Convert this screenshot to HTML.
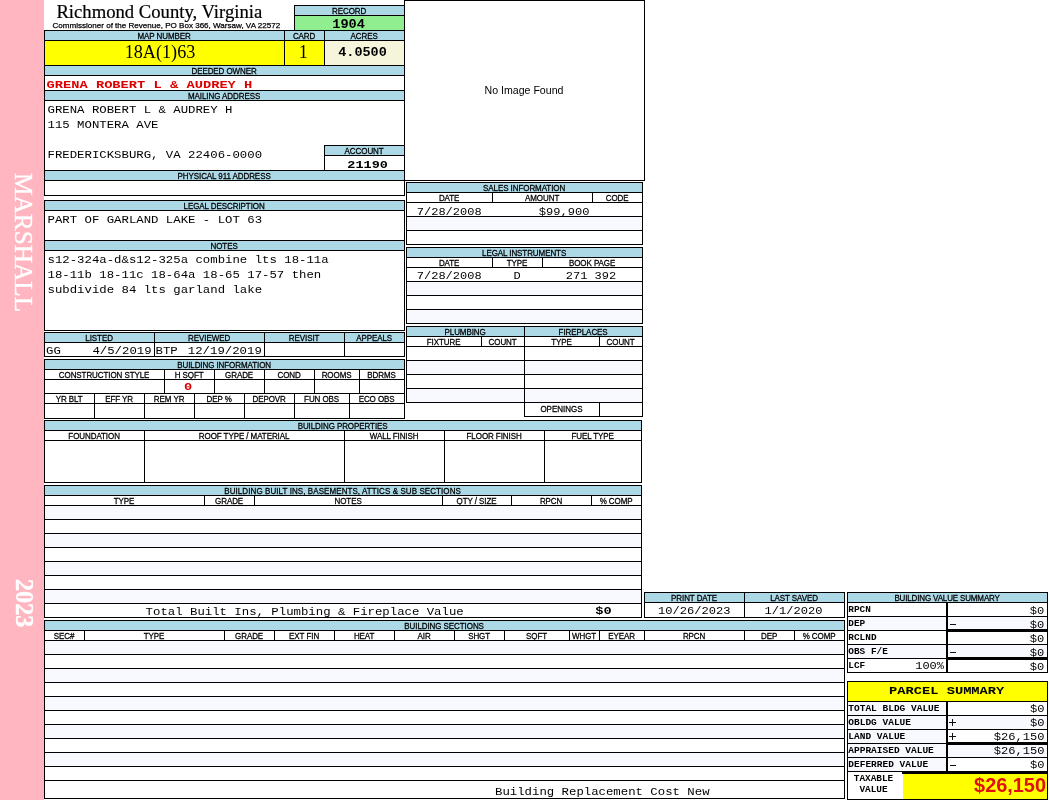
<!DOCTYPE html>
<html lang="en"><head><meta charset="utf-8"><title>Richmond County, Virginia - Property Card</title>
<style>
html,body{margin:0;padding:0;background:#fff;}
body{width:1050px;height:800px;overflow:hidden;font-family:"Liberation Sans",sans-serif;color:#000;}
#page{position:relative;width:1050px;height:800px;overflow:hidden;background:#fff;will-change:transform;}
.c{position:absolute;box-sizing:border-box;border:1px solid #000;}
.f{position:absolute;}
.t{position:absolute;white-space:pre;}
.sans{font-family:"Liberation Sans",sans-serif;}
.mono{font-family:"Liberation Mono",monospace;}
.serif{font-family:"Liberation Serif",serif;}
.b{font-weight:bold;}
.lb{-webkit-text-stroke:0.25px #000;}
.ts{-webkit-text-stroke:0.2px #000;}
.v{position:absolute;white-space:pre;color:#fff;line-height:1;height:1em;transform-origin:0 0;transform:rotate(90deg) translateY(-0.78em);-webkit-text-stroke:0.35px #fff;}
</style></head>
<body>
<div id="page">
<div class="f" style="left:0px;top:0px;width:44px;height:800px;background:#FFB6C1"></div>
<div class="t serif ts" style="top:-0.90px;font-size:18.67px;line-height:26px;left:56.40px;">Richmond County, Virginia</div>
<div class="t sans lb" style="top:20.21px;font-size:8.05px;line-height:12px;left:52.50px;">Commissioner of the Revenue, PO Box 366, Warsaw, VA 22572</div>
<div class="c" style="left:294px;top:5px;width:111px;height:11px;background:#ADD8E6;"></div>
<div class="t sans lb" style="top:5.93px;font-size:8px;line-height:12px;left:294.10px;width:110px;text-align:center;letter-spacing:-0.08px;transform:scale(1,1.08);transform-origin:50% 8.77px;">RECORD</div>
<div class="c" style="left:294px;top:15px;width:111px;height:16px;background:#90EE90;"></div>
<div class="t mono b" style="top:14.77px;font-size:13.66px;line-height:20px;left:148.60px;width:400px;text-align:center;transform:scale(1,0.889);transform-origin:50% 13.63px;">1904</div>
<div class="c" style="left:44px;top:30px;width:241px;height:11px;background:#ADD8E6;"></div>
<div class="t sans lb" style="top:30.93px;font-size:8px;line-height:12px;left:44.10px;width:240px;text-align:center;letter-spacing:-0.08px;transform:scale(1,1.08);transform-origin:50% 8.77px;">MAP NUMBER</div>
<div class="c" style="left:284px;top:30px;width:41px;height:11px;background:#ADD8E6;"></div>
<div class="t sans lb" style="top:30.93px;font-size:8px;line-height:12px;left:284.10px;width:40px;text-align:center;letter-spacing:-0.08px;transform:scale(1,1.08);transform-origin:50% 8.77px;">CARD</div>
<div class="c" style="left:324px;top:30px;width:81px;height:11px;background:#ADD8E6;"></div>
<div class="t sans lb" style="top:30.93px;font-size:8px;line-height:12px;left:324.10px;width:80px;text-align:center;letter-spacing:-0.08px;transform:scale(1,1.08);transform-origin:50% 8.77px;">ACRES</div>
<div class="c" style="left:44px;top:40px;width:241px;height:26px;background:#FFFF00;"></div>
<div class="c" style="left:284px;top:40px;width:41px;height:26px;background:#FFFF00;"></div>
<div class="c" style="left:324px;top:40px;width:81px;height:26px;background:#F5F5DC;"></div>
<div class="t serif" style="top:38.86px;font-size:18.2px;line-height:26px;left:-40.00px;width:400px;text-align:center;">18A(1)63</div>
<div class="t serif" style="top:38.86px;font-size:18.2px;line-height:26px;left:103.30px;width:400px;text-align:center;">1</div>
<div class="t mono b" style="top:42.81px;font-size:13.5px;line-height:20px;left:162.50px;width:400px;text-align:center;transform:scale(1,0.888);transform-origin:50% 13.59px;">4.0500</div>
<div class="c" style="left:44px;top:65px;width:361px;height:11px;background:#ADD8E6;"></div>
<div class="t sans lb" style="top:65.93px;font-size:8px;line-height:12px;left:44.10px;width:360px;text-align:center;letter-spacing:-0.08px;transform:scale(1,1.08);transform-origin:50% 8.77px;">DEEDED OWNER</div>
<div class="c" style="left:44px;top:75px;width:361px;height:16px;"></div>
<div class="t mono b" style="top:74.85px;font-size:13.73px;line-height:20px;left:46.50px;color:#DC0000;transform:scale(1,0.862);transform-origin:0 13.65px;">GRENA ROBERT L &amp; AUDREY H</div>
<div class="c" style="left:44px;top:90px;width:361px;height:11px;background:#ADD8E6;"></div>
<div class="t sans lb" style="top:90.93px;font-size:8px;line-height:12px;left:44.10px;width:360px;text-align:center;letter-spacing:-0.08px;transform:scale(1,1.08);transform-origin:50% 8.77px;">MAILING ADDRESS</div>
<div class="c" style="left:44px;top:100px;width:361px;height:71px;"></div>
<div class="t mono" style="top:100.72px;font-size:12.33px;line-height:18px;left:47.50px;transform:scale(1,0.948);transform-origin:0 12.28px;">GRENA ROBERT L &amp; AUDREY H</div>
<div class="t mono" style="top:115.72px;font-size:12.33px;line-height:18px;left:47.50px;transform:scale(1,0.948);transform-origin:0 12.28px;">115 MONTERA AVE</div>
<div class="t mono" style="top:145.72px;font-size:12.33px;line-height:18px;left:47.50px;transform:scale(1,0.948);transform-origin:0 12.28px;">FREDERICKSBURG, VA 22406-0000</div>
<div class="c" style="left:324px;top:145px;width:81px;height:11px;background:#ADD8E6;"></div>
<div class="t sans lb" style="top:145.93px;font-size:8px;line-height:12px;left:324.10px;width:80px;text-align:center;letter-spacing:-0.08px;transform:scale(1,1.08);transform-origin:50% 8.77px;">ACCOUNT</div>
<div class="c" style="left:324px;top:155px;width:81px;height:16px;"></div>
<div class="t mono b" style="top:155.41px;font-size:13.5px;line-height:20px;left:167.60px;width:400px;text-align:center;transform:scale(1,0.866);transform-origin:50% 13.59px;">21190</div>
<div class="c" style="left:44px;top:170px;width:361px;height:11px;background:#ADD8E6;"></div>
<div class="t sans lb" style="top:170.93px;font-size:8px;line-height:12px;left:44.10px;width:360px;text-align:center;letter-spacing:-0.08px;transform:scale(1,1.08);transform-origin:50% 8.77px;">PHYSICAL 911 ADDRESS</div>
<div class="c" style="left:44px;top:180px;width:361px;height:16px;"></div>
<div class="c" style="left:44px;top:200px;width:361px;height:11px;background:#ADD8E6;"></div>
<div class="t sans lb" style="top:200.93px;font-size:8px;line-height:12px;left:44.10px;width:360px;text-align:center;letter-spacing:-0.08px;transform:scale(1,1.08);transform-origin:50% 8.77px;">LEGAL DESCRIPTION</div>
<div class="c" style="left:44px;top:210px;width:361px;height:31px;"></div>
<div class="t mono" style="top:210.72px;font-size:12.33px;line-height:18px;left:47.50px;transform:scale(1,0.948);transform-origin:0 12.28px;">PART OF GARLAND LAKE - LOT 63</div>
<div class="c" style="left:44px;top:240px;width:361px;height:11px;background:#ADD8E6;"></div>
<div class="t sans lb" style="top:240.93px;font-size:8px;line-height:12px;left:44.10px;width:360px;text-align:center;letter-spacing:-0.08px;transform:scale(1,1.08);transform-origin:50% 8.77px;">NOTES</div>
<div class="c" style="left:44px;top:250px;width:361px;height:81px;"></div>
<div class="t mono" style="top:250.72px;font-size:12.33px;line-height:18px;left:47.50px;transform:scale(1,0.948);transform-origin:0 12.28px;">s12-324a-d&amp;s12-325a combine lts 18-11a</div>
<div class="t mono" style="top:265.72px;font-size:12.33px;line-height:18px;left:47.50px;transform:scale(1,0.948);transform-origin:0 12.28px;">18-11b 18-11c 18-64a 18-65 17-57 then</div>
<div class="t mono" style="top:280.72px;font-size:12.33px;line-height:18px;left:47.50px;transform:scale(1,0.948);transform-origin:0 12.28px;">subdivide 84 lts garland lake</div>
<div class="c" style="left:44px;top:332px;width:111px;height:11px;background:#ADD8E6;"></div>
<div class="t sans lb" style="top:332.93px;font-size:8px;line-height:12px;left:44.10px;width:110px;text-align:center;letter-spacing:-0.08px;transform:scale(1,1.08);transform-origin:50% 8.77px;">LISTED</div>
<div class="c" style="left:44px;top:342px;width:111px;height:15px;"></div>
<div class="c" style="left:154px;top:332px;width:111px;height:11px;background:#ADD8E6;"></div>
<div class="t sans lb" style="top:332.93px;font-size:8px;line-height:12px;left:154.10px;width:110px;text-align:center;letter-spacing:-0.08px;transform:scale(1,1.08);transform-origin:50% 8.77px;">REVIEWED</div>
<div class="c" style="left:154px;top:342px;width:111px;height:15px;"></div>
<div class="c" style="left:264px;top:332px;width:81px;height:11px;background:#ADD8E6;"></div>
<div class="t sans lb" style="top:332.93px;font-size:8px;line-height:12px;left:264.10px;width:80px;text-align:center;letter-spacing:-0.08px;transform:scale(1,1.08);transform-origin:50% 8.77px;">REVISIT</div>
<div class="c" style="left:264px;top:342px;width:81px;height:15px;"></div>
<div class="c" style="left:344px;top:332px;width:61px;height:11px;background:#ADD8E6;"></div>
<div class="t sans lb" style="top:332.93px;font-size:8px;line-height:12px;left:344.10px;width:60px;text-align:center;letter-spacing:-0.08px;transform:scale(1,1.08);transform-origin:50% 8.77px;">APPEALS</div>
<div class="c" style="left:344px;top:342px;width:61px;height:15px;"></div>
<div class="t mono" style="top:341.72px;font-size:12.33px;line-height:18px;left:46.00px;transform:scale(1,0.948);transform-origin:0 12.28px;">GG</div>
<div class="t mono" style="top:341.72px;font-size:12.33px;line-height:18px;left:-248.40px;width:400px;text-align:right;transform:scale(1,0.948);transform-origin:100% 12.28px;">4/5/2019</div>
<div class="t mono" style="top:341.72px;font-size:12.33px;line-height:18px;left:155.50px;transform:scale(1,0.948);transform-origin:0 12.28px;">BTP</div>
<div class="t mono" style="top:341.72px;font-size:12.33px;line-height:18px;left:-138.20px;width:400px;text-align:right;transform:scale(1,0.948);transform-origin:100% 12.28px;">12/19/2019</div>
<div class="c" style="left:44px;top:359px;width:361px;height:11px;background:#ADD8E6;"></div>
<div class="t sans lb" style="top:359.93px;font-size:8px;line-height:12px;left:44.10px;width:360px;text-align:center;letter-spacing:-0.08px;transform:scale(1,1.08);transform-origin:50% 8.77px;">BUILDING INFORMATION</div>
<div class="c" style="left:44px;top:369px;width:121px;height:11px;"></div>
<div class="t sans lb" style="top:369.93px;font-size:8px;line-height:12px;left:44.10px;width:120px;text-align:center;letter-spacing:-0.08px;transform:scale(1,1.08);transform-origin:50% 8.77px;">CONSTRUCTION STYLE</div>
<div class="c" style="left:44px;top:379px;width:121px;height:15px;"></div>
<div class="c" style="left:164px;top:369px;width:51px;height:11px;"></div>
<div class="t sans lb" style="top:369.93px;font-size:8px;line-height:12px;left:164.10px;width:50px;text-align:center;letter-spacing:-0.08px;transform:scale(1,1.08);transform-origin:50% 8.77px;">H SQFT</div>
<div class="c" style="left:164px;top:379px;width:51px;height:15px;"></div>
<div class="c" style="left:214px;top:369px;width:51px;height:11px;"></div>
<div class="t sans lb" style="top:369.93px;font-size:8px;line-height:12px;left:214.10px;width:50px;text-align:center;letter-spacing:-0.08px;transform:scale(1,1.08);transform-origin:50% 8.77px;">GRADE</div>
<div class="c" style="left:214px;top:379px;width:51px;height:15px;"></div>
<div class="c" style="left:264px;top:369px;width:51px;height:11px;"></div>
<div class="t sans lb" style="top:369.93px;font-size:8px;line-height:12px;left:264.10px;width:50px;text-align:center;letter-spacing:-0.08px;transform:scale(1,1.08);transform-origin:50% 8.77px;">COND</div>
<div class="c" style="left:264px;top:379px;width:51px;height:15px;"></div>
<div class="c" style="left:314px;top:369px;width:46px;height:11px;"></div>
<div class="t sans lb" style="top:369.93px;font-size:8px;line-height:12px;left:314.10px;width:45px;text-align:center;letter-spacing:-0.08px;transform:scale(1,1.08);transform-origin:50% 8.77px;">ROOMS</div>
<div class="c" style="left:314px;top:379px;width:46px;height:15px;"></div>
<div class="c" style="left:359px;top:369px;width:46px;height:11px;"></div>
<div class="t sans lb" style="top:369.93px;font-size:8px;line-height:12px;left:359.10px;width:45px;text-align:center;letter-spacing:-0.08px;transform:scale(1,1.08);transform-origin:50% 8.77px;">BDRMS</div>
<div class="c" style="left:359px;top:379px;width:46px;height:15px;"></div>
<div class="t mono b" style="top:377.37px;font-size:13.66px;line-height:20px;left:-11.80px;width:400px;text-align:center;color:#D80000;transform:scale(1,0.833);transform-origin:50% 13.63px;">0</div>
<div class="c" style="left:44px;top:393px;width:51px;height:11px;"></div>
<div class="t sans lb" style="top:393.93px;font-size:8px;line-height:12px;left:44.10px;width:50px;text-align:center;letter-spacing:-0.08px;transform:scale(1,1.08);transform-origin:50% 8.77px;">YR BLT</div>
<div class="c" style="left:44px;top:403px;width:51px;height:16px;"></div>
<div class="c" style="left:94px;top:393px;width:51px;height:11px;"></div>
<div class="t sans lb" style="top:393.93px;font-size:8px;line-height:12px;left:94.10px;width:50px;text-align:center;letter-spacing:-0.08px;transform:scale(1,1.08);transform-origin:50% 8.77px;">EFF YR</div>
<div class="c" style="left:94px;top:403px;width:51px;height:16px;"></div>
<div class="c" style="left:144px;top:393px;width:51px;height:11px;"></div>
<div class="t sans lb" style="top:393.93px;font-size:8px;line-height:12px;left:144.10px;width:50px;text-align:center;letter-spacing:-0.08px;transform:scale(1,1.08);transform-origin:50% 8.77px;">REM YR</div>
<div class="c" style="left:144px;top:403px;width:51px;height:16px;"></div>
<div class="c" style="left:194px;top:393px;width:51px;height:11px;"></div>
<div class="t sans lb" style="top:393.93px;font-size:8px;line-height:12px;left:194.10px;width:50px;text-align:center;letter-spacing:-0.08px;transform:scale(1,1.08);transform-origin:50% 8.77px;">DEP %</div>
<div class="c" style="left:194px;top:403px;width:51px;height:16px;"></div>
<div class="c" style="left:244px;top:393px;width:51px;height:11px;"></div>
<div class="t sans lb" style="top:393.93px;font-size:8px;line-height:12px;left:244.10px;width:50px;text-align:center;letter-spacing:-0.08px;transform:scale(1,1.08);transform-origin:50% 8.77px;">DEPOVR</div>
<div class="c" style="left:244px;top:403px;width:51px;height:16px;"></div>
<div class="c" style="left:294px;top:393px;width:56px;height:11px;"></div>
<div class="t sans lb" style="top:393.93px;font-size:8px;line-height:12px;left:294.10px;width:55px;text-align:center;letter-spacing:-0.08px;transform:scale(1,1.08);transform-origin:50% 8.77px;">FUN OBS</div>
<div class="c" style="left:294px;top:403px;width:56px;height:16px;"></div>
<div class="c" style="left:349px;top:393px;width:56px;height:11px;"></div>
<div class="t sans lb" style="top:393.93px;font-size:8px;line-height:12px;left:349.10px;width:55px;text-align:center;letter-spacing:-0.08px;transform:scale(1,1.08);transform-origin:50% 8.77px;">ECO OBS</div>
<div class="c" style="left:349px;top:403px;width:56px;height:16px;"></div>
<div class="c" style="left:44px;top:420px;width:598px;height:11px;background:#ADD8E6;"></div>
<div class="t sans lb" style="top:420.93px;font-size:8px;line-height:12px;left:44.10px;width:597px;text-align:center;letter-spacing:-0.08px;transform:scale(1,1.08);transform-origin:50% 8.77px;">BUILDING PROPERTIES</div>
<div class="c" style="left:44px;top:430px;width:101px;height:11px;"></div>
<div class="t sans lb" style="top:430.93px;font-size:8px;line-height:12px;left:44.10px;width:100px;text-align:center;letter-spacing:-0.08px;transform:scale(1,1.08);transform-origin:50% 8.77px;">FOUNDATION</div>
<div class="c" style="left:44px;top:440px;width:101px;height:43px;"></div>
<div class="c" style="left:144px;top:430px;width:201px;height:11px;"></div>
<div class="t sans lb" style="top:430.93px;font-size:8px;line-height:12px;left:144.10px;width:200px;text-align:center;letter-spacing:-0.08px;transform:scale(1,1.08);transform-origin:50% 8.77px;">ROOF TYPE / MATERIAL</div>
<div class="c" style="left:144px;top:440px;width:201px;height:43px;"></div>
<div class="c" style="left:344px;top:430px;width:101px;height:11px;"></div>
<div class="t sans lb" style="top:430.93px;font-size:8px;line-height:12px;left:344.10px;width:100px;text-align:center;letter-spacing:-0.08px;transform:scale(1,1.08);transform-origin:50% 8.77px;">WALL FINISH</div>
<div class="c" style="left:344px;top:440px;width:101px;height:43px;"></div>
<div class="c" style="left:444px;top:430px;width:101px;height:11px;"></div>
<div class="t sans lb" style="top:430.93px;font-size:8px;line-height:12px;left:444.10px;width:100px;text-align:center;letter-spacing:-0.08px;transform:scale(1,1.08);transform-origin:50% 8.77px;">FLOOR FINISH</div>
<div class="c" style="left:444px;top:440px;width:101px;height:43px;"></div>
<div class="c" style="left:544px;top:430px;width:98px;height:11px;"></div>
<div class="t sans lb" style="top:430.93px;font-size:8px;line-height:12px;left:544.10px;width:97px;text-align:center;letter-spacing:-0.08px;transform:scale(1,1.08);transform-origin:50% 8.77px;">FUEL TYPE</div>
<div class="c" style="left:544px;top:440px;width:98px;height:43px;"></div>
<div class="c" style="left:44px;top:485px;width:598px;height:11px;background:#ADD8E6;"></div>
<div class="t sans lb" style="top:485.93px;font-size:8px;line-height:12px;left:44.10px;width:597px;text-align:center;letter-spacing:0.08px;transform:scale(1,1.08);transform-origin:50% 8.77px;">BUILDING BUILT INS, BASEMENTS, ATTICS &amp; SUB SECTIONS</div>
<div class="c" style="left:44px;top:495px;width:161px;height:11px;"></div>
<div class="t sans lb" style="top:495.93px;font-size:8px;line-height:12px;left:44.10px;width:160px;text-align:center;letter-spacing:-0.08px;transform:scale(1,1.08);transform-origin:50% 8.77px;">TYPE</div>
<div class="c" style="left:204px;top:495px;width:51px;height:11px;"></div>
<div class="t sans lb" style="top:495.93px;font-size:8px;line-height:12px;left:204.10px;width:50px;text-align:center;letter-spacing:-0.08px;transform:scale(1,1.08);transform-origin:50% 8.77px;">GRADE</div>
<div class="c" style="left:254px;top:495px;width:189px;height:11px;"></div>
<div class="t sans lb" style="top:495.93px;font-size:8px;line-height:12px;left:254.10px;width:188px;text-align:center;letter-spacing:-0.08px;transform:scale(1,1.08);transform-origin:50% 8.77px;">NOTES</div>
<div class="c" style="left:442px;top:495px;width:70px;height:11px;"></div>
<div class="t sans lb" style="top:495.93px;font-size:8px;line-height:12px;left:442.10px;width:69px;text-align:center;letter-spacing:-0.08px;transform:scale(1,1.08);transform-origin:50% 8.77px;">QTY / SIZE</div>
<div class="c" style="left:511px;top:495px;width:81px;height:11px;"></div>
<div class="t sans lb" style="top:495.93px;font-size:8px;line-height:12px;left:511.10px;width:80px;text-align:center;letter-spacing:-0.08px;transform:scale(1,1.08);transform-origin:50% 8.77px;">RPCN</div>
<div class="c" style="left:591px;top:495px;width:51px;height:11px;"></div>
<div class="t sans lb" style="top:495.93px;font-size:8px;line-height:12px;left:591.10px;width:50px;text-align:center;letter-spacing:-0.08px;transform:scale(1,1.08);transform-origin:50% 8.77px;">% COMP</div>
<div class="c" style="left:44px;top:505px;width:598px;height:15px;background:#F8F8FF;"></div>
<div class="c" style="left:44px;top:519px;width:598px;height:15px;"></div>
<div class="c" style="left:44px;top:533px;width:598px;height:15px;background:#F8F8FF;"></div>
<div class="c" style="left:44px;top:547px;width:598px;height:15px;"></div>
<div class="c" style="left:44px;top:561px;width:598px;height:15px;background:#F8F8FF;"></div>
<div class="c" style="left:44px;top:575px;width:598px;height:15px;"></div>
<div class="c" style="left:44px;top:589px;width:598px;height:15px;background:#F8F8FF;"></div>
<div class="c" style="left:44px;top:603px;width:598px;height:15px;"></div>
<div class="t mono" style="top:602.72px;font-size:12.33px;line-height:18px;left:145.60px;transform:scale(1,0.948);transform-origin:0 12.28px;">Total Built Ins, Plumbing &amp; Fireplace Value</div>
<div class="t mono b" style="top:601.37px;font-size:13.66px;line-height:20px;left:595.20px;transform:scale(1,0.844);transform-origin:0 13.63px;">$0</div>
<div class="c" style="left:44px;top:620px;width:801px;height:11px;background:#ADD8E6;"></div>
<div class="t sans lb" style="top:620.93px;font-size:8px;line-height:12px;left:44.10px;width:800px;text-align:center;letter-spacing:-0.08px;transform:scale(1,1.08);transform-origin:50% 8.77px;">BUILDING SECTIONS</div>
<div class="c" style="left:44px;top:630px;width:41px;height:11px;"></div>
<div class="t sans lb" style="top:630.93px;font-size:8px;line-height:12px;left:44.10px;width:40px;text-align:center;letter-spacing:-0.08px;transform:scale(1,1.08);transform-origin:50% 8.77px;">SEC#</div>
<div class="c" style="left:84px;top:630px;width:141px;height:11px;"></div>
<div class="t sans lb" style="top:630.93px;font-size:8px;line-height:12px;left:84.10px;width:140px;text-align:center;letter-spacing:-0.08px;transform:scale(1,1.08);transform-origin:50% 8.77px;">TYPE</div>
<div class="c" style="left:224px;top:630px;width:51px;height:11px;"></div>
<div class="t sans lb" style="top:630.93px;font-size:8px;line-height:12px;left:224.10px;width:50px;text-align:center;letter-spacing:-0.08px;transform:scale(1,1.08);transform-origin:50% 8.77px;">GRADE</div>
<div class="c" style="left:274px;top:630px;width:61px;height:11px;"></div>
<div class="t sans lb" style="top:630.93px;font-size:8px;line-height:12px;left:274.10px;width:60px;text-align:center;letter-spacing:-0.08px;transform:scale(1,1.08);transform-origin:50% 8.77px;">EXT FIN</div>
<div class="c" style="left:334px;top:630px;width:61px;height:11px;"></div>
<div class="t sans lb" style="top:630.93px;font-size:8px;line-height:12px;left:334.10px;width:60px;text-align:center;letter-spacing:-0.08px;transform:scale(1,1.08);transform-origin:50% 8.77px;">HEAT</div>
<div class="c" style="left:394px;top:630px;width:61px;height:11px;"></div>
<div class="t sans lb" style="top:630.93px;font-size:8px;line-height:12px;left:394.10px;width:60px;text-align:center;letter-spacing:-0.08px;transform:scale(1,1.08);transform-origin:50% 8.77px;">AIR</div>
<div class="c" style="left:454px;top:630px;width:51px;height:11px;"></div>
<div class="t sans lb" style="top:630.93px;font-size:8px;line-height:12px;left:454.10px;width:50px;text-align:center;letter-spacing:-0.08px;transform:scale(1,1.08);transform-origin:50% 8.77px;">SHGT</div>
<div class="c" style="left:504px;top:630px;width:66px;height:11px;"></div>
<div class="t sans lb" style="top:630.93px;font-size:8px;line-height:12px;left:504.10px;width:65px;text-align:center;letter-spacing:-0.08px;transform:scale(1,1.08);transform-origin:50% 8.77px;">SQFT</div>
<div class="c" style="left:569px;top:630px;width:31px;height:11px;"></div>
<div class="t sans lb" style="top:630.93px;font-size:8px;line-height:12px;left:569.10px;width:30px;text-align:center;letter-spacing:-0.08px;transform:scale(1,1.08);transform-origin:50% 8.77px;">WHGT</div>
<div class="c" style="left:599px;top:630px;width:46px;height:11px;"></div>
<div class="t sans lb" style="top:630.93px;font-size:8px;line-height:12px;left:599.10px;width:45px;text-align:center;letter-spacing:-0.08px;transform:scale(1,1.08);transform-origin:50% 8.77px;">EYEAR</div>
<div class="c" style="left:644px;top:630px;width:101px;height:11px;"></div>
<div class="t sans lb" style="top:630.93px;font-size:8px;line-height:12px;left:644.10px;width:100px;text-align:center;letter-spacing:-0.08px;transform:scale(1,1.08);transform-origin:50% 8.77px;">RPCN</div>
<div class="c" style="left:744px;top:630px;width:51px;height:11px;"></div>
<div class="t sans lb" style="top:630.93px;font-size:8px;line-height:12px;left:744.10px;width:50px;text-align:center;letter-spacing:-0.08px;transform:scale(1,1.08);transform-origin:50% 8.77px;">DEP</div>
<div class="c" style="left:794px;top:630px;width:51px;height:11px;"></div>
<div class="t sans lb" style="top:630.93px;font-size:8px;line-height:12px;left:794.10px;width:50px;text-align:center;letter-spacing:-0.08px;transform:scale(1,1.08);transform-origin:50% 8.77px;">% COMP</div>
<div class="c" style="left:44px;top:640px;width:801px;height:15px;background:#F8F8FF;"></div>
<div class="c" style="left:44px;top:654px;width:801px;height:15px;"></div>
<div class="c" style="left:44px;top:668px;width:801px;height:15px;background:#F8F8FF;"></div>
<div class="c" style="left:44px;top:682px;width:801px;height:15px;"></div>
<div class="c" style="left:44px;top:696px;width:801px;height:15px;background:#F8F8FF;"></div>
<div class="c" style="left:44px;top:710px;width:801px;height:15px;"></div>
<div class="c" style="left:44px;top:724px;width:801px;height:15px;background:#F8F8FF;"></div>
<div class="c" style="left:44px;top:738px;width:801px;height:15px;"></div>
<div class="c" style="left:44px;top:752px;width:801px;height:15px;background:#F8F8FF;"></div>
<div class="c" style="left:44px;top:766px;width:801px;height:15px;"></div>
<div class="c" style="left:44px;top:780px;width:801px;height:19px;"></div>
<div class="t mono" style="top:782.72px;font-size:12.33px;line-height:18px;left:495.00px;transform:scale(1,0.948);transform-origin:0 12.28px;">Building Replacement Cost New</div>
<div class="c" style="left:404px;top:0px;width:241px;height:181px;"></div>
<div class="t sans" style="top:82.33px;font-size:10.6px;line-height:16px;left:324.00px;width:400px;text-align:center;">No Image Found</div>
<div class="c" style="left:406px;top:182px;width:237px;height:11px;background:#ADD8E6;"></div>
<div class="t sans lb" style="top:182.93px;font-size:8px;line-height:12px;left:406.10px;width:236px;text-align:center;letter-spacing:-0.08px;transform:scale(1,1.08);transform-origin:50% 8.77px;">SALES INFORMATION</div>
<div class="c" style="left:406px;top:192px;width:87px;height:11px;"></div>
<div class="t sans lb" style="top:192.93px;font-size:8px;line-height:12px;left:406.10px;width:86px;text-align:center;letter-spacing:-0.08px;transform:scale(1,1.08);transform-origin:50% 8.77px;">DATE</div>
<div class="c" style="left:492px;top:192px;width:101px;height:11px;"></div>
<div class="t sans lb" style="top:192.93px;font-size:8px;line-height:12px;left:492.10px;width:100px;text-align:center;letter-spacing:-0.08px;transform:scale(1,1.08);transform-origin:50% 8.77px;">AMOUNT</div>
<div class="c" style="left:592px;top:192px;width:51px;height:11px;"></div>
<div class="t sans lb" style="top:192.93px;font-size:8px;line-height:12px;left:592.10px;width:50px;text-align:center;letter-spacing:-0.08px;transform:scale(1,1.08);transform-origin:50% 8.77px;">CODE</div>
<div class="c" style="left:406px;top:202px;width:237px;height:15px;"></div>
<div class="c" style="left:406px;top:216px;width:237px;height:15px;background:#F8F8FF;"></div>
<div class="c" style="left:406px;top:230px;width:237px;height:15px;"></div>
<div class="t mono" style="top:202.81px;font-size:12.0px;line-height:18px;left:249.20px;width:400px;text-align:center;transform:scale(1,0.974);transform-origin:50% 12.19px;">7/28/2008</div>
<div class="t mono" style="top:202.79px;font-size:12.08px;line-height:18px;left:189.50px;width:400px;text-align:right;transform:scale(1,0.967);transform-origin:100% 12.21px;">$99,900</div>
<div class="c" style="left:406px;top:247px;width:237px;height:11px;background:#ADD8E6;"></div>
<div class="t sans lb" style="top:247.93px;font-size:8px;line-height:12px;left:406.10px;width:236px;text-align:center;letter-spacing:-0.08px;transform:scale(1,1.08);transform-origin:50% 8.77px;">LEGAL INSTRUMENTS</div>
<div class="c" style="left:406px;top:257px;width:87px;height:11px;"></div>
<div class="t sans lb" style="top:257.93px;font-size:8px;line-height:12px;left:406.10px;width:86px;text-align:center;letter-spacing:-0.08px;transform:scale(1,1.08);transform-origin:50% 8.77px;">DATE</div>
<div class="c" style="left:492px;top:257px;width:51px;height:11px;"></div>
<div class="t sans lb" style="top:257.93px;font-size:8px;line-height:12px;left:492.10px;width:50px;text-align:center;letter-spacing:-0.08px;transform:scale(1,1.08);transform-origin:50% 8.77px;">TYPE</div>
<div class="c" style="left:542px;top:257px;width:101px;height:11px;"></div>
<div class="t sans lb" style="top:257.93px;font-size:8px;line-height:12px;left:542.10px;width:100px;text-align:center;letter-spacing:-0.08px;transform:scale(1,1.08);transform-origin:50% 8.77px;">BOOK PAGE</div>
<div class="c" style="left:406px;top:267px;width:237px;height:15px;"></div>
<div class="c" style="left:406px;top:281px;width:237px;height:15px;background:#F8F8FF;"></div>
<div class="c" style="left:406px;top:295px;width:237px;height:15px;"></div>
<div class="c" style="left:406px;top:309px;width:237px;height:15px;background:#F8F8FF;"></div>
<div class="t mono" style="top:267.41px;font-size:12.0px;line-height:18px;left:249.20px;width:400px;text-align:center;transform:scale(1,0.974);transform-origin:50% 12.19px;">7/28/2008</div>
<div class="t mono" style="top:267.41px;font-size:12.0px;line-height:18px;left:317.00px;width:400px;text-align:center;transform:scale(1,0.974);transform-origin:50% 12.19px;">D</div>
<div class="t mono" style="top:267.41px;font-size:12.0px;line-height:18px;left:391.00px;width:400px;text-align:center;transform:scale(1,0.974);transform-origin:50% 12.19px;">271 392</div>
<div class="c" style="left:406px;top:326px;width:119px;height:11px;background:#ADD8E6;"></div>
<div class="t sans lb" style="top:326.93px;font-size:8px;line-height:12px;left:406.10px;width:118px;text-align:center;letter-spacing:-0.08px;transform:scale(1,1.08);transform-origin:50% 8.77px;">PLUMBING</div>
<div class="c" style="left:524px;top:326px;width:119px;height:11px;background:#ADD8E6;"></div>
<div class="t sans lb" style="top:326.93px;font-size:8px;line-height:12px;left:524.10px;width:118px;text-align:center;letter-spacing:-0.08px;transform:scale(1,1.08);transform-origin:50% 8.77px;">FIREPLACES</div>
<div class="c" style="left:406px;top:336px;width:76px;height:11px;"></div>
<div class="t sans lb" style="top:336.93px;font-size:8px;line-height:12px;left:406.10px;width:75px;text-align:center;letter-spacing:-0.08px;transform:scale(1,1.08);transform-origin:50% 8.77px;">FIXTURE</div>
<div class="c" style="left:481px;top:336px;width:44px;height:11px;"></div>
<div class="t sans lb" style="top:336.93px;font-size:8px;line-height:12px;left:481.10px;width:43px;text-align:center;letter-spacing:-0.08px;transform:scale(1,1.08);transform-origin:50% 8.77px;">COUNT</div>
<div class="c" style="left:524px;top:336px;width:76px;height:11px;"></div>
<div class="t sans lb" style="top:336.93px;font-size:8px;line-height:12px;left:524.10px;width:75px;text-align:center;letter-spacing:-0.08px;transform:scale(1,1.08);transform-origin:50% 8.77px;">TYPE</div>
<div class="c" style="left:599px;top:336px;width:44px;height:11px;"></div>
<div class="t sans lb" style="top:336.93px;font-size:8px;line-height:12px;left:599.10px;width:43px;text-align:center;letter-spacing:-0.08px;transform:scale(1,1.08);transform-origin:50% 8.77px;">COUNT</div>
<div class="c" style="left:406px;top:346px;width:119px;height:15px;"></div>
<div class="c" style="left:524px;top:346px;width:119px;height:15px;"></div>
<div class="c" style="left:406px;top:360px;width:119px;height:15px;background:#F8F8FF;"></div>
<div class="c" style="left:524px;top:360px;width:119px;height:15px;background:#F8F8FF;"></div>
<div class="c" style="left:406px;top:374px;width:119px;height:15px;"></div>
<div class="c" style="left:524px;top:374px;width:119px;height:15px;"></div>
<div class="c" style="left:406px;top:388px;width:119px;height:15px;background:#F8F8FF;"></div>
<div class="c" style="left:524px;top:388px;width:119px;height:15px;background:#F8F8FF;"></div>
<div class="c" style="left:524px;top:402px;width:76px;height:15px;"></div>
<div class="c" style="left:599px;top:402px;width:44px;height:15px;"></div>
<div class="t sans lb" style="top:404.23px;font-size:8px;line-height:12px;left:521.50px;width:80px;text-align:center;letter-spacing:0.0px;transform:scale(1,1.08);transform-origin:50% 8.77px;">OPENINGS</div>
<div class="c" style="left:644px;top:592px;width:101px;height:11px;background:#ADD8E6;"></div>
<div class="t sans lb" style="top:592.93px;font-size:8px;line-height:12px;left:644.10px;width:100px;text-align:center;letter-spacing:-0.08px;transform:scale(1,1.08);transform-origin:50% 8.77px;">PRINT DATE</div>
<div class="c" style="left:744px;top:592px;width:101px;height:11px;background:#ADD8E6;"></div>
<div class="t sans lb" style="top:592.93px;font-size:8px;line-height:12px;left:744.10px;width:100px;text-align:center;letter-spacing:-0.08px;transform:scale(1,1.08);transform-origin:50% 8.77px;">LAST SAVED</div>
<div class="c" style="left:644px;top:602px;width:101px;height:16px;"></div>
<div class="c" style="left:744px;top:602px;width:101px;height:16px;"></div>
<div class="t mono" style="top:601.59px;font-size:12.08px;line-height:18px;left:494.20px;width:400px;text-align:center;transform:scale(1,0.967);transform-origin:50% 12.21px;">10/26/2023</div>
<div class="t mono" style="top:601.59px;font-size:12.08px;line-height:18px;left:593.50px;width:400px;text-align:center;transform:scale(1,0.967);transform-origin:50% 12.21px;">1/1/2020</div>
<div class="c" style="left:847px;top:592px;width:201px;height:11px;background:#ADD8E6;"></div>
<div class="t sans lb" style="top:592.93px;font-size:8px;line-height:12px;left:847.10px;width:200px;text-align:center;letter-spacing:-0.15px;transform:scale(1,1.08);transform-origin:50% 8.77px;">BUILDING VALUE SUMMARY</div>
<div class="c" style="left:847px;top:602px;width:101px;height:15px;"></div>
<div class="c" style="left:947px;top:602px;width:101px;height:15px;"></div>
<div class="t mono b" style="top:603.49px;font-size:9.42px;line-height:14px;left:848.30px;transform:scale(1,0.967);transform-origin:0 9.51px;">RPCN</div>
<div class="t mono" style="top:601.79px;font-size:12.08px;line-height:18px;left:644.20px;width:400px;text-align:right;transform:scale(1,0.967);transform-origin:100% 12.21px;">$0</div>
<div class="c" style="left:847px;top:616px;width:101px;height:15px;background:#F8F8FF;"></div>
<div class="c" style="left:947px;top:616px;width:101px;height:15px;background:#F8F8FF;"></div>
<div class="t mono b" style="top:617.49px;font-size:9.42px;line-height:14px;left:848.30px;transform:scale(1,0.967);transform-origin:0 9.51px;">DEP</div>
<div class="t mono" style="top:615.79px;font-size:12.08px;line-height:18px;left:644.20px;width:400px;text-align:right;transform:scale(1,0.967);transform-origin:100% 12.21px;">$0</div>
<div class="f" style="left:950px;top:624px;width:6px;height:1px;background:#111"></div>
<div class="c" style="left:847px;top:630px;width:101px;height:15px;"></div>
<div class="c" style="left:947px;top:630px;width:101px;height:15px;"></div>
<div class="t mono b" style="top:631.49px;font-size:9.42px;line-height:14px;left:848.30px;transform:scale(1,0.967);transform-origin:0 9.51px;">RCLND</div>
<div class="t mono" style="top:629.79px;font-size:12.08px;line-height:18px;left:644.20px;width:400px;text-align:right;transform:scale(1,0.967);transform-origin:100% 12.21px;">$0</div>
<div class="c" style="left:847px;top:644px;width:101px;height:15px;background:#F8F8FF;"></div>
<div class="c" style="left:947px;top:644px;width:101px;height:15px;background:#F8F8FF;"></div>
<div class="t mono b" style="top:645.49px;font-size:9.42px;line-height:14px;left:848.30px;transform:scale(1,0.967);transform-origin:0 9.51px;">OBS F/E</div>
<div class="t mono" style="top:643.79px;font-size:12.08px;line-height:18px;left:644.20px;width:400px;text-align:right;transform:scale(1,0.967);transform-origin:100% 12.21px;">$0</div>
<div class="f" style="left:950px;top:652px;width:6px;height:1px;background:#111"></div>
<div class="c" style="left:847px;top:658px;width:101px;height:15px;"></div>
<div class="c" style="left:947px;top:658px;width:101px;height:15px;"></div>
<div class="t mono b" style="top:659.49px;font-size:9.42px;line-height:14px;left:848.30px;transform:scale(1,0.967);transform-origin:0 9.51px;">LCF</div>
<div class="t mono" style="top:657.79px;font-size:12.08px;line-height:18px;left:644.20px;width:400px;text-align:right;transform:scale(1,0.967);transform-origin:100% 12.21px;">$0</div>
<div class="t mono" style="top:656.81px;font-size:12.0px;line-height:18px;left:544.00px;width:400px;text-align:right;transform:scale(1,0.974);transform-origin:100% 12.19px;">100%</div>
<div class="f" style="left:946px;top:602px;width:2px;height:71px;background:#000"></div>
<div class="f" style="left:947px;top:629px;width:101px;height:3px;background:#000"></div>
<div class="f" style="left:947px;top:657px;width:101px;height:3px;background:#000"></div>
<div class="c" style="left:847px;top:681px;width:201px;height:21px;background:#FFFF00;"></div>
<div class="t mono b" style="top:680.95px;font-size:13.73px;line-height:20px;left:746.70px;width:400px;text-align:center;transform:scale(1,0.84);transform-origin:50% 13.65px;">PARCEL SUMMARY</div>
<div class="c" style="left:847px;top:701px;width:101px;height:15px;background:#F8F8FF;"></div>
<div class="c" style="left:947px;top:701px;width:101px;height:15px;"></div>
<div class="t mono b" style="top:701.87px;font-size:9.5px;line-height:14px;left:848.30px;transform:scale(1,0.958);transform-origin:0 9.53px;">TOTAL BLDG VALUE</div>
<div class="t mono" style="top:700.19px;font-size:12.08px;line-height:18px;left:644.40px;width:400px;text-align:right;transform:scale(1,0.967);transform-origin:100% 12.21px;">$0</div>
<div class="c" style="left:847px;top:715px;width:101px;height:15px;background:#F8F8FF;"></div>
<div class="c" style="left:947px;top:715px;width:101px;height:15px;background:#F8F8FF;"></div>
<div class="t mono b" style="top:715.87px;font-size:9.5px;line-height:14px;left:848.30px;transform:scale(1,0.958);transform-origin:0 9.53px;">OBLDG VALUE</div>
<div class="t mono" style="top:714.19px;font-size:12.08px;line-height:18px;left:644.40px;width:400px;text-align:right;transform:scale(1,0.967);transform-origin:100% 12.21px;">$0</div>
<div class="f" style="left:949px;top:722px;width:7px;height:1px;background:#111"></div>
<div class="f" style="left:952px;top:719px;width:1px;height:7px;background:#111"></div>
<div class="c" style="left:847px;top:729px;width:101px;height:15px;background:#F8F8FF;"></div>
<div class="c" style="left:947px;top:729px;width:101px;height:15px;"></div>
<div class="t mono b" style="top:729.87px;font-size:9.5px;line-height:14px;left:848.30px;transform:scale(1,0.958);transform-origin:0 9.53px;">LAND VALUE</div>
<div class="t mono" style="top:728.19px;font-size:12.08px;line-height:18px;left:644.40px;width:400px;text-align:right;transform:scale(1,0.967);transform-origin:100% 12.21px;">$26,150</div>
<div class="f" style="left:949px;top:736px;width:7px;height:1px;background:#111"></div>
<div class="f" style="left:952px;top:733px;width:1px;height:7px;background:#111"></div>
<div class="c" style="left:847px;top:743px;width:101px;height:15px;background:#F8F8FF;"></div>
<div class="c" style="left:947px;top:743px;width:101px;height:15px;background:#F8F8FF;"></div>
<div class="t mono b" style="top:743.87px;font-size:9.5px;line-height:14px;left:848.30px;transform:scale(1,0.958);transform-origin:0 9.53px;">APPRAISED VALUE</div>
<div class="t mono" style="top:742.19px;font-size:12.08px;line-height:18px;left:644.40px;width:400px;text-align:right;transform:scale(1,0.967);transform-origin:100% 12.21px;">$26,150</div>
<div class="c" style="left:847px;top:757px;width:101px;height:15px;background:#F8F8FF;"></div>
<div class="c" style="left:947px;top:757px;width:101px;height:15px;"></div>
<div class="t mono b" style="top:757.87px;font-size:9.5px;line-height:14px;left:848.30px;transform:scale(1,0.958);transform-origin:0 9.53px;">DEFERRED VALUE</div>
<div class="t mono" style="top:756.19px;font-size:12.08px;line-height:18px;left:644.40px;width:400px;text-align:right;transform:scale(1,0.967);transform-origin:100% 12.21px;">$0</div>
<div class="f" style="left:950px;top:765px;width:6px;height:1px;background:#111"></div>
<div class="f" style="left:946px;top:701px;width:2px;height:71px;background:#000"></div>
<div class="f" style="left:947px;top:742px;width:101px;height:3px;background:#000"></div>
<div class="c" style="left:847px;top:771px;width:201px;height:29px;"></div>
<div class="f" style="left:903px;top:772px;width:144px;height:27px;background:#FFFF00"></div>
<div class="f" style="left:902px;top:771px;width:146px;height:3px;background:#000"></div>
<div class="t mono b" style="top:772.49px;font-size:9.42px;line-height:14px;left:673.50px;width:400px;text-align:center;transform:scale(1,0.967);transform-origin:50% 9.51px;">TAXABLE</div>
<div class="t mono b" style="top:782.69px;font-size:9.42px;line-height:14px;left:673.50px;width:400px;text-align:center;transform:scale(1,0.967);transform-origin:50% 9.51px;">VALUE</div>
<div class="t sans b" style="top:770.60px;font-size:19.9px;line-height:28px;left:646.00px;width:400px;text-align:right;color:#E01010;">$26,150</div>
<div class="v serif" style="left:16px;top:172.5px;font-size:25.3px;">MARSHALL</div>
<div class="v serif b" style="left:16.5px;top:579px;font-size:24.2px;">2023</div>
</div>
</body></html>
